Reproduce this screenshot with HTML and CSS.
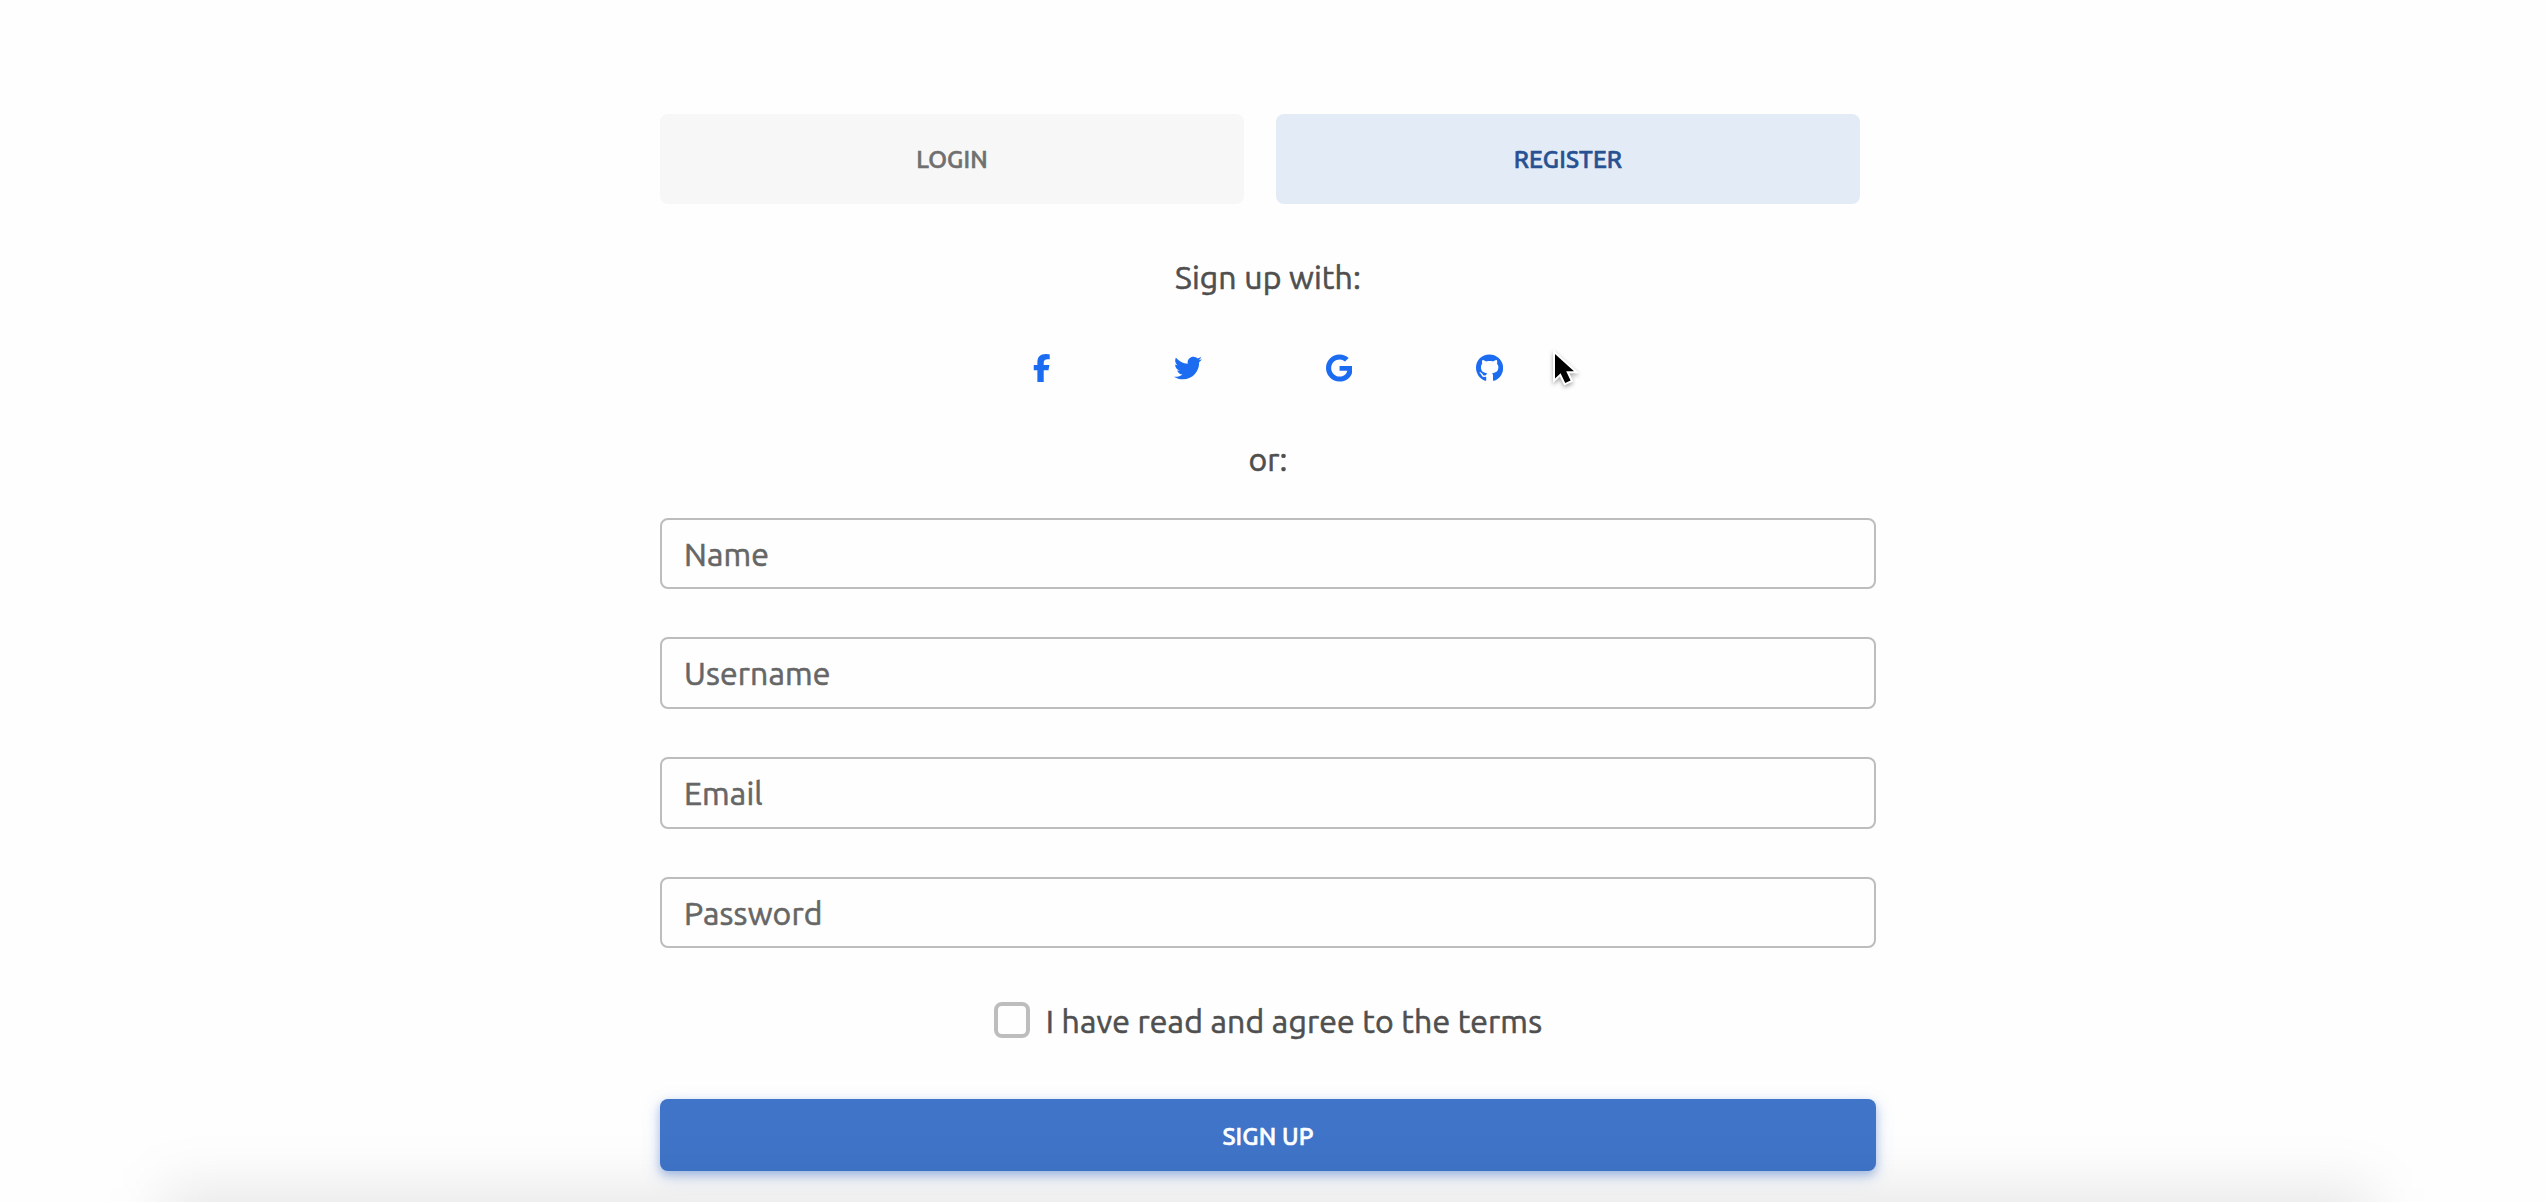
FILE: index.html
```html
<!DOCTYPE html>
<html lang="en">
<head>
<meta charset="utf-8">
<title>Register</title>
<link rel="stylesheet" href="styles.css">
</head>
<body>
<main class="panel">
  <nav class="tabs">
    <a class="tab">LOGIN</a>
    <a class="tab tab-active">REGISTER</a>
  </nav>
  <form class="form">
    <p class="caption">Sign up with:</p>
    <div class="social">
      <svg class="icon" viewBox="0 0 320 512"><path d="M80 299.3V512H196V299.3h86.5l18-97.8H196V166.9c0-51.7 20.3-71.5 72.7-71.5c16.3 0 29.4 .4 37 1.2V7.9C291.4 4 256.4 0 236.2 0C129.3 0 80 50.5 80 159.4v42.1H14v97.8H80z"/></svg>
      <svg class="icon" viewBox="0 0 512 512"><path d="M459.37 151.716c.325 4.548.325 9.097.325 13.645 0 138.72-105.583 298.558-298.558 298.558-59.452 0-114.68-17.219-161.137-47.106 8.447.974 16.568 1.299 25.34 1.299 49.055 0 94.213-16.568 130.274-44.832-46.132-.975-84.792-31.188-98.112-72.772 6.498.974 12.995 1.624 19.818 1.624 9.421 0 18.843-1.3 27.614-3.573-48.081-9.747-84.143-51.98-84.143-102.985v-1.299c13.969 7.797 30.214 12.67 47.431 13.319-28.264-18.843-46.781-51.005-46.781-87.391 0-19.492 5.197-37.36 14.294-52.954 51.655 63.675 129.3 105.258 216.365 109.807-1.624-7.797-2.599-15.918-2.599-24.04 0-57.828 46.782-104.934 104.934-104.934 30.213 0 57.502 12.67 76.67 33.137 23.715-4.548 46.456-13.32 66.599-25.34-7.798 24.366-24.366 44.833-46.132 57.827 21.117-2.273 41.584-8.122 60.426-16.243-14.292 20.791-32.161 39.308-52.628 54.253z"/></svg>
      <svg class="icon" viewBox="0 0 488 512"><path d="M488 261.8C488 403.3 391.1 504 248 504 110.8 504 0 393.2 0 256S110.8 8 248 8c66.8 0 123 24.5 166.3 64.9l-67.5 64.9C258.5 52.6 94.3 116.6 94.3 256c0 86.5 69.1 156.6 153.7 156.6 98.2 0 135-70.4 140.8-106.9H248v-85.3h236.1c2.3 12.7 3.9 24.9 3.9 41.4z"/></svg>
      <svg class="icon" viewBox="0 0 496 512"><path d="M165.9 397.4c0 2-2.3 3.6-5.2 3.6-3.3.3-5.6-1.3-5.6-3.6 0-2 2.3-3.6 5.2-3.6 3-.3 5.6 1.3 5.6 3.6zm-31.1-4.5c-.7 2 1.3 4.3 4.3 4.9 2.6 1 5.6 0 6.2-2s-1.3-4.3-4.3-5.2c-2.6-.7-5.5.3-6.2 2.3zm44.2-1.7c-2.9.7-4.9 2.6-4.6 4.9.3 2 2.9 3.3 5.9 2.6 2.9-.7 4.9-2.6 4.6-4.6-.3-1.9-3-3.2-5.9-2.9zM244.8 8C106.1 8 0 113.3 0 252c0 110.9 69.8 205.8 169.5 239.2 12.8 2.3 17.3-5.6 17.3-12.1 0-6.2-.3-40.4-.3-61.4 0 0-70 15-84.7-29.8 0 0-11.4-29.1-27.8-36.6 0 0-22.9-15.7 1.6-15.4 0 0 24.9 2 38.6 25.8 21.9 38.6 58.6 27.5 72.9 20.9 2.3-16 8.8-27.1 16-33.7-55.9-6.2-112.3-14.3-112.3-110.5 0-27.5 7.6-41.3 23.6-58.9-2.6-6.5-11.1-33.3 2.6-67.9 20.9-6.5 69 27 69 27 20-5.6 41.5-8.5 62.8-8.5s42.8 2.9 62.8 8.5c0 0 48.1-33.6 69-27 13.7 34.7 5.2 61.4 2.6 67.9 16 17.7 25.8 31.5 25.8 58.9 0 96.5-58.9 104.2-114.8 110.5 9.2 7.9 17 22.9 17 46.4 0 33.7-.3 75.4-.3 83.6 0 6.5 4.6 14.4 17.3 12.1C428.2 457.8 496 362.9 496 252 496 113.3 383.5 8 244.8 8z"/></svg>
    </div>
    <p class="caption">or:</p>
    <div class="fields">
      <div class="field">Name</div>
      <div class="field">Username</div>
      <div class="field">Email</div>
      <div class="field">Password</div>
    </div>
    <label class="terms"><span class="box"></span><span>I have read and agree to the terms</span></label>
    <div class="submit">SIGN UP</div>
  </form>
</main>
<div class="overlay"><div class="shade"></div></div>
<svg class="cursor" width="36" height="44" viewBox="0 0 36 44"><path d="M5 5V29.5L10.6 24.3L15.2 34L20.6 31.6L16.2 22.2H24z" fill="#000" stroke="#fff" stroke-width="4" paint-order="stroke"/></svg>
</body>
</html>
```
FILE: styles.css
```css
* { box-sizing: border-box; }
html, body { height: 100%; }
body {
  margin: 0;
  overflow: hidden;
  background: #fefefe;
  color: #4f4f4f;
  font: 400 32px/51.2px Ubuntu, "Noto Sans", sans-serif;
  letter-spacing: .14px;
  -webkit-text-stroke: .6px currentColor;
}
.panel { width: 1216px; margin-left: 660px; padding-top: 114px; }
.tabs { display: flex; gap: 32px; }
.tab {
  width: 584px;
  height: 90px;
  border-radius: 8px;
  background: #f7f7f7;
  color: #707070;
  font-size: 24px;
  font-weight: 500;
  line-height: 92px;
  text-align: center;
}
.tab-active { background: #e3ebf7; color: #285192; }
.form { display: flex; flex-direction: column; padding-top: 47.5px; }
.caption { margin: 0; text-align: center; }
.social {
  display: flex;
  justify-content: center;
  align-items: center;
  gap: 123.6px;
  height: 130.8px;
}
.icon { height: 28px; fill: #1c6cf2; }
.fields { display: flex; flex-direction: column; gap: 48px; padding-top: 33.1px; }
.field {
  height: 71.6px;
  padding: 9px 22px 7.4px;
  border: 2px solid #bdbdbd;
  border-radius: 8px;
  color: #666;
}
.terms {
  display: flex;
  justify-content: center;
  gap: 16px;
  margin-top: 48px;
}
.box {
  width: 36px;
  height: 36px;
  margin-top: 5.6px;
  border: 4px solid #bdbdbd;
  border-radius: 8px;
}
.submit {
  height: 72px;
  margin-top: 51.3px;
  border-radius: 8px;
  background: #3f74c8;
  box-shadow: 0 4px 10px rgba(59, 113, 202, .38), 0 6px 20px rgba(59, 113, 202, .18);
  color: #fff;
  font-size: 24px;
  font-weight: 500;
  line-height: 75px;
  text-align: center;
}
/* Soft shade rising from the lower edge of the viewport */
.overlay {
  position: fixed;
  inset: 0;
  overflow: hidden;
  pointer-events: none;
}
.shade {
  position: absolute;
  left: 164px;
  right: 174px;
  top: 1188px;
  bottom: -200px;
  background: rgba(0, 0, 0, .09);
  filter: blur(28px);
}
.cursor {
  position: absolute;
  left: 1550px;
  top: 349px;
  filter: drop-shadow(0 2px 2px rgba(0, 0, 0, .35));
}
```
